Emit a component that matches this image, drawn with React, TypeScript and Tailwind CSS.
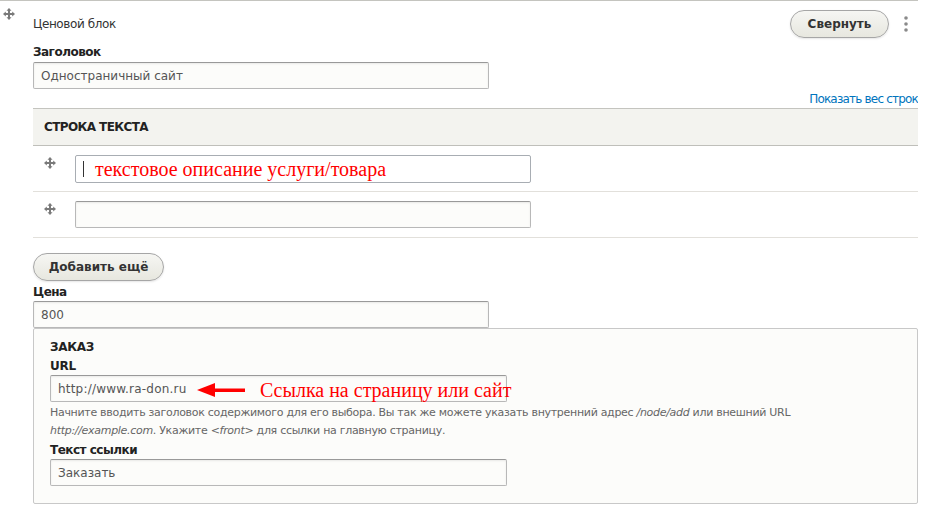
import React from "react";

const Drag = ({ className = "" }: { className?: string }) => (
  <svg className={className} width="12" height="12" viewBox="0 0 12 12" fill="#7a7a7a">
    <rect x="5" y="2" width="2" height="8" />
    <rect x="2" y="5" width="8" height="2" />
    <polygon points="6,0 3.5,2.8 8.5,2.8" />
    <polygon points="6,12 3.5,9.2 8.5,9.2" />
    <polygon points="0,6 2.8,3.5 2.8,8.5" />
    <polygon points="12,6 9.2,3.5 9.2,8.5" />
  </svg>
);

const inputCls =
  "h-[27px] border border-[#b8b8b8] border-t-[#999] rounded-[2px] bg-[#fcfcfa] shadow-[inset_0_1px_2px_rgba(0,0,0,0.08)] px-[7px] flex items-center text-[12px] text-[#555]";

const btnCls =
  "h-[28px] rounded-full border border-[#a6a6a6] bg-gradient-to-b from-[#f6f6f3] to-[#e7e7df] flex items-center justify-center text-[12px] font-bold text-[#333] shadow-[0_1px_2px_rgba(0,0,0,0.1)]";

export default function App() {
  return (
    <div
      className="w-[931px] h-[511px] bg-white overflow-hidden text-[#333]"
      style={{ fontFamily: '"DejaVu Sans", Verdana, sans-serif' }}
    >
      <div className="w-[918px] border-t border-[#c4c4bf] flex">
        <div className="w-[33px] shrink-0 pt-[7px] pl-[3px]">
          <Drag />
        </div>
        <div className="flex-1 flex flex-col">
          {/* header row */}
          <div className="flex items-center h-[28px] mt-[9px]">
            <span className="text-[12px] text-[#333] tracking-[-0.4px]">Ценовой блок</span>
            <div className="flex-1" />
            <div className={btnCls + " w-[99px]"}>Свернуть</div>
            <div className="w-[29px] flex justify-center pl-[4px]">
              <svg width="6" height="16" viewBox="0 0 6 16" fill="#8a8a8a">
                <circle cx="3" cy="2" r="1.8" />
                <circle cx="3" cy="8" r="1.8" />
                <circle cx="3" cy="14" r="1.8" />
              </svg>
            </div>
          </div>
          <div className="mt-[7px] text-[12px] font-bold text-[#222] tracking-[-0.5px] leading-[14px]">Заголовок</div>
          <div className={inputCls + " w-[456px] mt-[3px]"}>Одностраничный сайт</div>
          <div className="flex justify-end mt-[2px] h-[17px] text-[12px] text-[#0074bd] tracking-[-0.8px] leading-[17px] whitespace-nowrap overflow-hidden">
            Показать вес строк
          </div>
          {/* table */}
          <div className="border-t border-[#c4c4bf]">
            <div className="h-[37px] bg-[#f3f3ef] border-b border-[#bfbfba] flex items-center pl-[11px] text-[12px] font-bold text-[#222] tracking-[-0.6px]">
              СТРОКА ТЕКСТА
            </div>
            <div className="h-[46px] border-b border-[#e2e0db] flex items-start pt-[9px]">
              <div className="w-[42px] pl-[11px] pt-[2px]">
                <Drag />
              </div>
              <div className="w-[456px] h-[28px] border border-[#a8adb3] rounded-[2px] bg-white flex items-center pl-[7px]">
                <span className="w-px h-[16px] bg-[#333] mr-[11px]" />
                <span
                  className="text-[20px] text-[#ff0000] leading-none"
                  style={{ fontFamily: '"Liberation Serif", "Times New Roman", serif' }}
                >
                  текстовое описание услуги/товара
                </span>
              </div>
            </div>
            <div className="h-[46px] border-b border-[#e2e0db] flex items-start pt-[9px]">
              <div className="w-[42px] pl-[11px] pt-[2px]">
                <Drag />
              </div>
              <div className={inputCls + " w-[456px]"}></div>
            </div>
          </div>
          <div className={btnCls + " w-[131px] mt-[15px]"}>Добавить ещё</div>
          <div className="mt-[4px] text-[12px] font-bold text-[#222] tracking-[-0.5px] leading-[14px]">Цена</div>
          <div className={inputCls + " w-[456px] mt-[2px]"}>800</div>
          {/* fieldset */}
          <div className="h-[176px] border border-[#c8c8c8] bg-[#fcfcfa] rounded-[2px] pl-[16px] pt-[11px]">
            <div className="text-[12px] font-bold text-[#222] tracking-[-0.3px] leading-[14px]">ЗАКАЗ</div>
            <div className="mt-[5px] text-[12px] font-bold text-[#222] tracking-[-0.3px] leading-[14px]">URL</div>
            <div className="flex items-center mt-[2px]">
              <div className={inputCls + " w-[457px] relative"}>
                <span className="tracking-[0.2px]">http://www.ra-don.ru</span>
                <div className="absolute left-[146px] top-[4px] flex items-center">
                  <svg width="50" height="16" viewBox="0 0 50 16">
                    <polygon points="0,8 18,1 18,15" fill="#ff0000" />
                    <rect x="16" y="6.5" width="32" height="3.5" fill="#ff0000" />
                  </svg>
                  <span
                    className="ml-[13px] text-[20px] text-[#ff0000] leading-none whitespace-nowrap"
                    style={{ fontFamily: '"Liberation Serif", "Times New Roman", serif' }}
                  >
                    Ссылка на страницу или сайт
                  </span>
                </div>
              </div>
            </div>
            <div className="mt-[2px] text-[11px] text-[#666] leading-[18px] w-[850px] tracking-[-0.3px]">
              Начните вводить заголовок содержимого для его выбора. Вы так же можете указать внутренний адрес{" "}
              <em>/node/add</em> или внешний URL
              <br />
              <em>http://example.com</em>. Укажите <em>&lt;front&gt;</em> для ссылки на главную страницу.
            </div>
            <div className="mt-[3px] text-[12px] font-bold text-[#222] tracking-[-0.5px] leading-[14px]">Текст ссылки</div>
            <div className={inputCls + " w-[457px] mt-[2px]"}>Заказать</div>
          </div>
        </div>
      </div>
    </div>
  );
}
